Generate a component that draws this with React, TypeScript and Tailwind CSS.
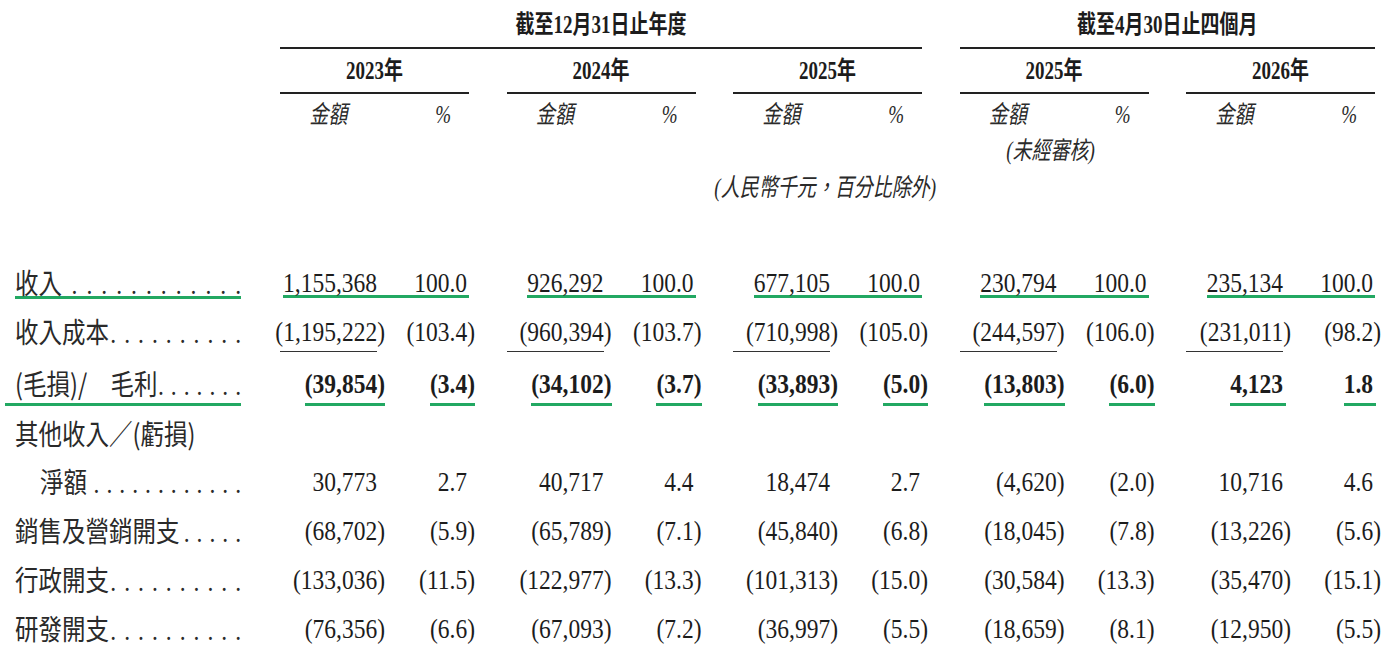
import React from 'react';

const SERIF = "font-['Liberation_Serif','Noto_Sans_CJK_TC',serif]";
const SANS = "font-['Noto_Sans_CJK_TC',sans-serif]";

type Pair = [string, string];

function Num({ v, bold, ul }: { v: string; bold?: boolean; ul?: boolean }) {
  const neg = v.startsWith('(');
  const hang = neg ? '-mr-[8px]' : ul ? 'pr-[3px] -mr-[3px]' : '';
  const line = ul ? 'border-b-[3px] border-[#22a862] pb-[7px] -mb-[10px]' : '';
  return (
    <span className={`flex ${hang} ${line}`}>
      <span className={`inline-block scale-y-[1.18] ${bold ? 'font-bold' : ''}`}>{v}</span>
    </span>
  );
}

function Dots({ n, gap }: { n: number; gap: string }) {
  return (
    <span className={`ml-auto flex ${gap} ${SERIF}`}>
      {Array.from({ length: n }).map((_, i) => (
        <span key={i}>.</span>
      ))}
    </span>
  );
}

function Label({
  text,
  dots,
  gap,
  indent,
  variant,
}: {
  text: string;
  dots: number;
  gap: string;
  indent?: boolean;
  variant?: 'rev' | 'gp';
}) {
  const wrap =
    variant === 'rev'
      ? 'w-[226px] border-b-[3px] border-[#22a862] -mb-[3px]'
      : variant === 'gp'
      ? 'w-[236px] -ml-[10px] pl-[10px] border-b-[3px] border-[#22a862] pb-[6px] -mb-[9px]'
      : 'w-[226px]';
  return (
    <div className={`w-[280px] shrink-0 pl-[15px] flex ${SANS} text-[#2a2a2a]`}>
      <div className={`flex ${wrap}`}>
        <div className="flex-1 flex items-baseline scale-y-[1.2]">
          <span className={indent ? 'ml-[25px]' : ''}>{text}</span>
          {dots > 0 && <Dots n={dots} gap={gap} />}
        </div>
      </div>
    </div>
  );
}

function Cell({ a, p, bold, ul }: { a: string; p: string; bold?: boolean; ul?: boolean }) {
  return (
    <div className="flex w-[189px] items-center">
      <div className="w-[97px] flex justify-end">
        <Num v={a} bold={bold} ul={ul} />
      </div>
      <div className="flex-1 flex justify-end pr-[2px]">
        <Num v={p} bold={bold} ul={ul} />
      </div>
    </div>
  );
}

function RevCell({ a, p }: { a: string; p: string }) {
  return (
    <div className="flex w-[189px] justify-end">
      <div className="flex border-b-[3px] border-[#22a862] -mb-[3px]">
        <span className="inline-block scale-y-[1.18]">{a}</span>
        <span className="w-[92px] flex justify-end pr-[2px]">
          <span className="inline-block scale-y-[1.18]">{p}</span>
        </span>
      </div>
    </div>
  );
}

function CostCell({ a, p }: { a: string; p: string }) {
  return (
    <div className="flex w-[189px]">
      <div className="w-[97px] flex justify-end border-b-[1.5px] border-[#333] pb-[7px] -mb-[8.5px]">
        <Num v={a} />
      </div>
      <div className="flex-1 flex justify-end pr-[2px]">
        <Num v={p} />
      </div>
    </div>
  );
}

const revenue: Pair[] = [
  ['1,155,368', '100.0'],
  ['926,292', '100.0'],
  ['677,105', '100.0'],
  ['230,794', '100.0'],
  ['235,134', '100.0'],
];
const cost: Pair[] = [
  ['(1,195,222)', '(103.4)'],
  ['(960,394)', '(103.7)'],
  ['(710,998)', '(105.0)'],
  ['(244,597)', '(106.0)'],
  ['(231,011)', '(98.2)'],
];
const gross: Pair[] = [
  ['(39,854)', '(3.4)'],
  ['(34,102)', '(3.7)'],
  ['(33,893)', '(5.0)'],
  ['(13,803)', '(6.0)'],
  ['4,123', '1.8'],
];
const otherNet: Pair[] = [
  ['30,773', '2.7'],
  ['40,717', '4.4'],
  ['18,474', '2.7'],
  ['(4,620)', '(2.0)'],
  ['10,716', '4.6'],
];
const selling: Pair[] = [
  ['(68,702)', '(5.9)'],
  ['(65,789)', '(7.1)'],
  ['(45,840)', '(6.8)'],
  ['(18,045)', '(7.8)'],
  ['(13,226)', '(5.6)'],
];
const admin: Pair[] = [
  ['(133,036)', '(11.5)'],
  ['(122,977)', '(13.3)'],
  ['(101,313)', '(15.0)'],
  ['(30,584)', '(13.3)'],
  ['(35,470)', '(15.1)'],
];
const rnd: Pair[] = [
  ['(76,356)', '(6.6)'],
  ['(67,093)', '(7.2)'],
  ['(36,997)', '(5.5)'],
  ['(18,659)', '(8.1)'],
  ['(12,950)', '(5.5)'],
];

const years = ['2023年', '2024年', '2025年', '2025年', '2026年'];

export default function App() {
  return (
    <div className={`w-[1398px] h-[654px] overflow-hidden bg-white text-[#1c1c1c] ${SERIF} leading-[24px]`}>
      {/* Header */}
      <div className="text-[19px]">
        <div className="pt-[13px] flex">
          <div className="w-[280px] shrink-0" />
          <div className="flex gap-[37.5px]">
            <div className="w-[642px] text-center border-b-2 border-[#222] pb-[10px] font-bold">
              <span className="inline-block scale-y-[1.3]">截至12月31日止年度</span>
            </div>
            <div className="w-[415.5px] text-center border-b-2 border-[#222] pb-[10px] font-bold">
              <span className="inline-block scale-y-[1.3]">截至4月30日止四個月</span>
            </div>
          </div>
        </div>
        <div className="flex">
          <div className="w-[280px] shrink-0" />
          <div className="flex gap-[37.5px] items-start">
            {years.map((y, i) => (
              <div key={i} className="w-[189px] flex flex-col">
                <div className="pt-[10px] pb-[9px] border-b-2 border-[#222] text-center font-bold">
                  <span className="inline-block scale-y-[1.3]">{y}</span>
                </div>
                <div className="mt-[9px] flex italic text-[#2a2a2a]">
                  <div className="w-[97px] text-center">
                    <span className="inline-block scale-y-[1.3]">金額</span>
                  </div>
                  <div className="flex-1 text-right pr-[18px]">
                    <span className="inline-block scale-y-[1.3]">%</span>
                  </div>
                </div>
                {i === 3 && (
                  <div className="mt-[12px] text-center pr-[7px] italic text-[#2a2a2a]">
                    <span className="inline-block scale-y-[1.3]">(未經審核)</span>
                  </div>
                )}
              </div>
            ))}
          </div>
        </div>
        <div className="mt-[13px] flex">
          <div className="w-[936px] text-right italic text-[#2a2a2a]">
            <span className="inline-block scale-y-[1.3]">(人民幣千元，百分比除外)</span>
          </div>
        </div>
      </div>

      {/* Body */}
      <div className="mt-[58px] text-[23.5px]">
        <div className="flex h-[49px] items-center">
          <Label text="收入" dots={12} gap="gap-[9px]" variant="rev" />
          <div className="flex gap-[37.5px]">
            {revenue.map(([a, p], i) => (
              <RevCell key={i} a={a} p={p} />
            ))}
          </div>
        </div>

        <div className="flex h-[49px] items-center mb-[3px]">
          <Label text="收入成本" dots={10} gap="gap-[8px]" />
          <div className="flex gap-[37.5px]">
            {cost.map(([a, p], i) => (
              <CostCell key={i} a={a} p={p} />
            ))}
          </div>
        </div>

        <div className="flex h-[49px] items-center">
          <Label text={'(毛損)/\u3000毛利'} dots={7} gap="gap-[7px]" variant="gp" />
          <div className="flex gap-[37.5px]">
            {gross.map(([a, p], i) => (
              <Cell key={i} a={a} p={p} bold ul />
            ))}
          </div>
        </div>

        <div className="flex h-[49px] items-center">
          <Label text="其他收入／(虧損)" dots={0} gap="gap-[8px]" />
        </div>

        <div className="flex h-[49px] items-center">
          <Label text="淨額" dots={12} gap="gap-[7px]" indent />
          <div className="flex gap-[37.5px]">
            {otherNet.map(([a, p], i) => (
              <Cell key={i} a={a} p={p} />
            ))}
          </div>
        </div>

        <div className="flex h-[49px] items-center">
          <Label text="銷售及營銷開支" dots={5} gap="gap-[7px]" />
          <div className="flex gap-[37.5px]">
            {selling.map(([a, p], i) => (
              <Cell key={i} a={a} p={p} />
            ))}
          </div>
        </div>

        <div className="flex h-[49px] items-center">
          <Label text="行政開支" dots={10} gap="gap-[8px]" />
          <div className="flex gap-[37.5px]">
            {admin.map(([a, p], i) => (
              <Cell key={i} a={a} p={p} />
            ))}
          </div>
        </div>

        <div className="flex h-[49px] items-center">
          <Label text="研發開支" dots={10} gap="gap-[8px]" />
          <div className="flex gap-[37.5px]">
            {rnd.map(([a, p], i) => (
              <Cell key={i} a={a} p={p} />
            ))}
          </div>
        </div>
      </div>
    </div>
  );
}
